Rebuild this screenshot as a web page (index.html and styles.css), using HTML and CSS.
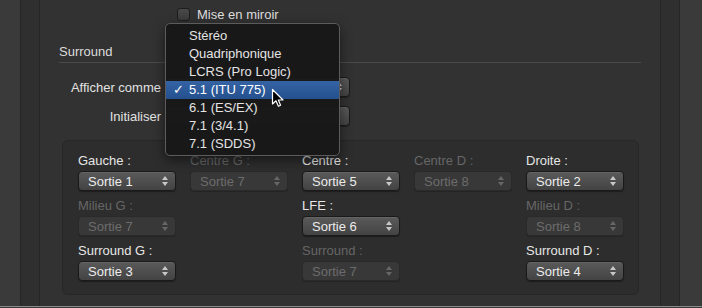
FILE: index.html
```html
<!DOCTYPE html>
<html lang="fr">
<head>
  <meta charset="UTF-8" />
  <title>Surround</title>
  <link rel="stylesheet" href="styles.css">
</head>
<body>
  <div class="window">
    <div class="frame-outer"></div>
    <div class="frame-inner"></div>

    <main class="panel">
      <div class="mirror-row">
        <span class="checkbox"></span>
        <span>Mise en miroir</span>
      </div>

      <h2 class="section-title">Surround</h2>

      <!-- both controls sit under the open menu -->
      <div class="form-row">
        <label class="form-label">Afficher comme</label>
        <div class="popup wide"></div>
      </div>
      <div class="form-row second">
        <label class="form-label">Initialiser</label>
        <div class="push-button wide"></div>
      </div>

      <!-- Output assignment -->
      <div class="group">
        <div class="cell">
          <div class="cell-label">Gauche :</div>
          <div class="popup">Sortie 1</div>
        </div>
        <div class="cell off">
          <div class="cell-label">Centre G :</div>
          <div class="popup">Sortie 7</div>
        </div>
        <div class="cell">
          <div class="cell-label">Centre :</div>
          <div class="popup">Sortie 5</div>
        </div>
        <div class="cell off">
          <div class="cell-label">Centre D :</div>
          <div class="popup">Sortie 8</div>
        </div>
        <div class="cell">
          <div class="cell-label">Droite :</div>
          <div class="popup">Sortie 2</div>
        </div>

        <div class="cell off">
          <div class="cell-label">Milieu G :</div>
          <div class="popup">Sortie 7</div>
        </div>
        <div class="cell empty"></div>
        <div class="cell">
          <div class="cell-label">LFE :</div>
          <div class="popup">Sortie 6</div>
        </div>
        <div class="cell empty"></div>
        <div class="cell off">
          <div class="cell-label">Milieu D :</div>
          <div class="popup">Sortie 8</div>
        </div>

        <div class="cell">
          <div class="cell-label">Surround G :</div>
          <div class="popup">Sortie 3</div>
        </div>
        <div class="cell empty"></div>
        <div class="cell off">
          <div class="cell-label">Surround :</div>
          <div class="popup">Sortie 7</div>
        </div>
        <div class="cell empty"></div>
        <div class="cell">
          <div class="cell-label">Surround D :</div>
          <div class="popup">Sortie 4</div>
        </div>
      </div>
    </main>

    <div class="frame-inner"></div>
    <div class="frame-outer right"></div>
  </div>

  <!-- Open popup menu -->
  <ul class="menu">
    <li>Stéréo</li>
    <li>Quadriphonique</li>
    <li>LCRS (Pro Logic)</li>
    <li class="selected"><span class="check">✓</span>5.1 (ITU 775)</li>
    <li>6.1 (ES/EX)</li>
    <li>7.1 (3/4.1)</li>
    <li>7.1 (SDDS)</li>
  </ul>

  <svg class="cursor" width="14" height="20" viewBox="0 0 14 20">
    <path d="M1.5 1.5 L1.5 16 L5 12.8 L7.4 18.3 L9.6 17.3 L7.3 12 L12 12 Z" fill="#000" stroke="#fff" stroke-width="1.2" stroke-linejoin="round"/>
  </svg>
</body>
</html>
```

FILE: styles.css
```css
* {
  box-sizing: border-box;
}

body {
  margin: 0;
  width: 702px;
  height: 308px;
  overflow: hidden;
  background-color: #383838;
  font-family: "Liberation Sans", Arial, sans-serif;
  font-size: 13px;
  color: #e4e4e4;
}

.window {
  display: flex;
  height: 307px;
  border-bottom: 1px solid #8a8a8a;
}

.frame-outer {
  width: 20px;
  background-color: #3a3a3a;
}

.frame-outer.right {
  width: 22px;
}

.frame-inner {
  width: 20px;
  background-color: #2f2f2f;
  border-left: 1px solid #262626;
  border-right: 1px solid #262626;
}

.panel {
  flex: 1;
  background-color: #323232;
  padding: 0 19px;
}

/* top checkbox */
.mirror-row {
  display: flex;
  align-items: center;
  gap: 7px;
  height: 16px;
  margin-top: 6px;
  margin-left: 118px;
  color: #dedede;
}

.checkbox {
  width: 13px;
  height: 13px;
  border-radius: 3px;
  border: 1px solid #1c1c1c;
  background: linear-gradient(#4a4a4a, #3a3a3a);
}

.section-title {
  margin: 22px 0 0;
  padding-bottom: 2px;
  font-size: 13px;
  font-weight: normal;
  line-height: 16px;
  color: #dcdcdc;
  border-bottom: 1px solid #4a4a4a;
}

.form-row {
  display: flex;
  align-items: center;
  gap: 5px;
  height: 20px;
  margin-top: 14px;
}

.form-row.second {
  margin-top: 9px;
}

.form-label {
  width: 102px;
  text-align: right;
  color: #e2e2e2;
}

.wide {
  width: 184px;
}

/* popup buttons */
.popup,
.push-button {
  position: relative;
  display: flex;
  align-items: center;
  height: 20px;
  padding-left: 9px;
  border-radius: 4px;
  border: 1px solid #1a1a1a;
  background: linear-gradient(#5a5a5a, #434343);
  box-shadow: 0 1px 1px rgba(0,0,0,0.35), inset 0 1px 0 rgba(255,255,255,0.07);
  color: #ececec;
  font-size: 13px;
}

.popup::before,
.popup::after {
  content: "";
  position: absolute;
  right: 7px;
  border-left: 3px solid transparent;
  border-right: 3px solid transparent;
}

.popup::before {
  top: 4px;
  border-bottom: 4px solid #c8c8c8;
}

.popup::after {
  bottom: 4px;
  border-top: 4px solid #c8c8c8;
}

.group {
  display: grid;
  grid-template-columns: repeat(5, 98px);
  grid-auto-rows: 39px;
  align-content: start;
  column-gap: 14px;
  row-gap: 6px;
  height: 155px;
  margin: 14px 2px 0 3px;
  padding: 11px 0 0 15px;
  background-color: #2d2d2d;
  border: 1px solid #272727;
  border-radius: 6px;
}

.cell {
  display: flex;
  flex-direction: column;
  gap: 2px;
}

.cell-label {
  height: 17px;
  line-height: 17px;
  color: #e6e6e6;
}

.cell.off .cell-label {
  color: #666;
}

.cell.off .popup {
  background: #383838;
  border-color: #2a2a2a;
  box-shadow: 0 1px 1px rgba(0,0,0,0.2);
  color: #6c6c6c;
}

.cell.off .popup::before {
  border-bottom-color: #666;
}

.cell.off .popup::after {
  border-top-color: #666;
}

/* open menu */
.menu {
  position: absolute;
  left: 165px;
  top: 23px;
  width: 175px;
  height: 133px;
  margin: 0;
  padding: 3px 0 0;
  list-style: none;
  background-color: rgba(24,24,24,0.97);
  border: 1px solid #5c5c5c;
  border-radius: 5px;
  box-shadow: 0 4px 12px rgba(0,0,0,0.5);
}

.menu li {
  position: relative;
  height: 18px;
  line-height: 18px;
  padding-left: 23px;
  color: #e4e4e4;
}

.menu li.selected {
  background: linear-gradient(#3563a4, #24508e);
  color: #fff;
}

.check {
  position: absolute;
  left: 7px;
  font-family: "DejaVu Sans", sans-serif;
  font-size: 13px;
}

.cursor {
  position: absolute;
  left: 271px;
  top: 88px;
}
```
